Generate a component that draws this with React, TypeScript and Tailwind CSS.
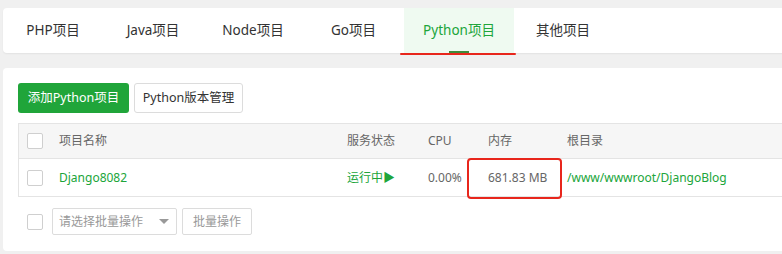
const tabs = [
  { name: "PHP项目", w: "w-[100px]" },
  { name: "Java项目", w: "w-[100px]" },
  { name: "Node项目", w: "w-[100px]" },
  { name: "Go项目", w: "w-[101px]" },
  { name: "Python项目", w: "w-[110px]", active: true },
  { name: "其他项目", w: "w-[98px]" },
];

const font = "font-['Noto_Sans','Noto_Sans_CJK_SC',sans-serif]";

function Checkbox() {
  return <div className="w-4 h-4 border border-[#cfcfcf] rounded-[2px] bg-white" />;
}

export default function App() {
  return (
    <div className={`w-[782px] h-[254px] overflow-hidden bg-[#f0f0f0] pl-[3px] pt-[8px] ${font}`}>
      {/* Tabs */}
      <div className="w-[800px] h-[45px] bg-white rounded-[4px] shadow-[0_1px_2px_rgba(0,0,0,0.06)] flex">
        {tabs.map((t) => (
          <div
            key={t.name}
            className={`${t.w} h-full relative flex items-center justify-center text-[13.5px] ${
              t.active ? "bg-[#effaf1] text-[#20a53a]" : "text-[#333]"
            }`}
          >
            {t.name}
            {t.active && (
              <>
                <div className="absolute bottom-0 left-[45px] w-[20px] h-[2px] bg-[#3f8a3a]" />
                <div className="absolute bottom-[-2px] left-[-4px] right-[-2px] h-[2px] rounded-full bg-[#e8261c]" />
              </>
            )}
          </div>
        ))}
      </div>

      {/* Content card */}
      <div className="w-[800px] h-[183px] mt-[15px] bg-white rounded-[4px] p-[15px] text-[12px]">
        <div className="flex gap-[5px] h-[30px] text-[12.5px]">
          <div className="w-[111px] h-full rounded-[3px] bg-[#20a53a] text-white flex items-center justify-center">
            添加Python项目
          </div>
          <div className="w-[109px] h-full rounded-[3px] border border-[#dcdcdc] text-[#333] flex items-center justify-center">
            Python版本管理
          </div>
        </div>

        <div className="mt-[10px] border border-[#e4e4e4] border-r-0">
          <div className="h-[35px] bg-[#f6f6f6] flex items-center text-[#666] border-b border-[#e4e4e4]">
            <div className="w-[31px] pl-[8px]"><Checkbox /></div>
            <div className="w-[288px] pl-[9px]">项目名称</div>
            <div className="w-[81px] pl-[9px]">服务状态</div>
            <div className="w-[60px] pl-[9px]">CPU</div>
            <div className="w-[79px] pl-[9px]">内存</div>
            <div className="pl-[9px]">根目录</div>
          </div>
          <div className="h-[37px] flex items-center text-[#666]">
            <div className="w-[31px] pl-[8px]"><Checkbox /></div>
            <div className="w-[288px] pl-[9px] text-[#20a53a]">Django8082</div>
            <div className="w-[81px] pl-[9px] text-[#20a53a]">运行中▶</div>
            <div className="w-[60px] pl-[9px]">0.00%</div>
            <div className="w-[79px] pl-[9px] relative">
              681.83 MB
              <div className="absolute left-[-12px] top-[-11px] w-[95px] h-[41px] border-2 border-[#e8261c] rounded-[4px]" />
            </div>
            <div className="pl-[9px] text-[#20a53a]">/www/wwwroot/DjangoBlog</div>
          </div>
        </div>

        <div className="mt-[11px] flex items-center h-[27px]">
          <div className="ml-[9px]"><Checkbox /></div>
          <div className="ml-[9px] w-[125px] h-full border border-[#dcdcdc] rounded-[2px] flex items-center justify-between pl-[6px] pr-[7px] text-[#999]">
            <span>请选择批量操作</span>
            <span className="w-0 h-0 border-l-[5px] border-r-[5px] border-t-[5px] border-l-transparent border-r-transparent border-t-[#999]" />
          </div>
          <div className="ml-[5px] w-[70px] h-full border border-[#dcdcdc] rounded-[2px] flex items-center justify-center text-[#999]">
            批量操作
          </div>
        </div>
      </div>
    </div>
  );
}
